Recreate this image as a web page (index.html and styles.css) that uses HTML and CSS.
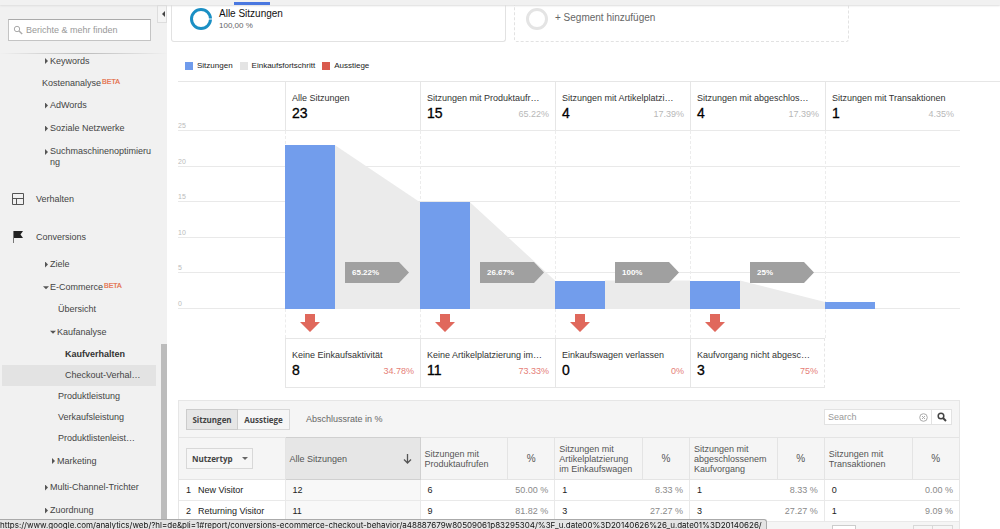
FILE: index.html
```html
<!DOCTYPE html>
<html lang="de">
<head>
<meta charset="utf-8">
<title>Kaufverhalten</title>
<link rel="stylesheet" href="styles.css">
</head>
<body>
<header class="topbar"><span class="topbar-tab"></span></header>
<div class="layout">
  <aside class="sidebar">
    <form class="side-search">
      <label class="side-field">
        <svg width="10" height="10" viewBox="0 0 10 10" fill="none" stroke="#aaa"><circle cx="4" cy="4" r="2.7"/><path d="M6 6l3.2 3" stroke-width="1.4"/></svg>
        <input type="text" placeholder="Berichte &amp; mehr finden" aria-label="Berichte &amp; mehr finden">
      </label>
    </form>
    <button class="collapse" type="button" aria-label="Navigation einklappen"></button>
    <nav>
      <ul class="nav">
        <li><a class="closed" href="#">Keywords</a></li>
        <li><a class="plain" href="#">Kostenanalyse<sup>BETA</sup></a></li>
        <li><a class="closed" href="#">AdWords</a></li>
        <li><a class="closed" href="#">Soziale Netzwerke</a></li>
        <li><a class="closed wrap" href="#">Suchmaschinenoptimierung</a></li>
        <li><a class="section" href="#"><svg width="12" height="12" viewBox="0 0 12 12" fill="none" stroke="#555"><path d="M.5.5h11v11H.5zM.5 5.5h11M4.5 5.5v6"/></svg>Verhalten</a></li>
        <li><a class="section" href="#"><svg width="12" height="12" viewBox="0 0 12 12"><path d="M1.5 0v12" stroke="#777"/><path d="M2 0h9L8.5 3.5 11 7H2z" fill="#222"/></svg>Conversions</a></li>
        <li class="first"><a class="closed" href="#">Ziele</a></li>
        <li><a class="open" href="#">E-Commerce<sup>BETA</sup></a></li>
        <li><a class="leaf" href="#">Übersicht</a></li>
        <li><a class="open deep" href="#">Kaufanalyse</a></li>
        <li><a class="leaf deep current" href="#">Kaufverhalten</a></li>
        <li><a class="leaf deep hover" href="#">Checkout-Verhal…</a></li>
        <li><a class="leaf" href="#">Produktleistung</a></li>
        <li><a class="leaf" href="#">Verkaufsleistung</a></li>
        <li><a class="leaf" href="#">Produktlistenleist…</a></li>
        <li><a class="closed deep" href="#">Marketing</a></li>
        <li class="first"><a class="closed" href="#">Multi-Channel-Trichter</a></li>
        <li><a class="closed" href="#">Zuordnung</a></li>
      </ul>
    </nav>
    <span class="scroll-thumb"></span>
  </aside>

  <main class="content">
    <section class="segments">
      <div class="segment">
        <svg width="24" height="24" viewBox="0 0 24 24" fill="none"><circle cx="12" cy="12" r="9.5" stroke="#1a8fc4" stroke-width="3"/><path d="M19 12h5" stroke="#fff"/></svg>
        <div><div class="segment-name">Alle Sitzungen</div><div class="segment-share">100,00 %</div></div>
      </div>
      <button class="segment segment-add" type="button">
        <svg width="24" height="24" viewBox="0 0 24 24" fill="none"><circle cx="12" cy="12" r="9.5" stroke="#e4e4e4" stroke-width="3"/></svg>
        <span class="segment-name">+ Segment hinzufügen</span>
      </button>
    </section>

    <ul class="legend">
      <li><i class="swatch blue"></i>Sitzungen</li>
      <li><i class="swatch grey"></i>Einkaufsfortschritt</li>
      <li><i class="swatch red"></i>Ausstiege</li>
    </ul>

    <section class="funnel">
      <div class="steps">
        <div class="step"><div class="step-name">Alle Sitzungen</div><div class="step-row"><b>23</b></div></div>
        <div class="step"><div class="step-name">Sitzungen mit Produktaufr…</div><div class="step-row"><b>15</b><span>65.22%</span></div></div>
        <div class="step"><div class="step-name">Sitzungen mit Artikelplatzi…</div><div class="step-row"><b>4</b><span>17.39%</span></div></div>
        <div class="step"><div class="step-name">Sitzungen mit abgeschlos…</div><div class="step-row"><b>4</b><span>17.39%</span></div></div>
        <div class="step"><div class="step-name">Sitzungen mit Transaktionen</div><div class="step-row"><b>1</b><span>4.35%</span></div></div>
      </div>
      <div class="plot">
        <div class="gridlines"><span>25</span><span>20</span><span>15</span><span>10</span><span>5</span><span>0</span></div>
        <div class="bars">
          <div class="col"><div class="bar" style="height:92%"></div>
            <svg class="flow" viewBox="0 0 86 25" preserveAspectRatio="none"><path d="M0 2L86 10V25H0z"/></svg><span class="rate">65.22%</span></div>
          <div class="col"><div class="bar" style="height:60%"></div>
            <svg class="flow" viewBox="0 0 86 25" preserveAspectRatio="none"><path d="M0 10L86 21V25H0z"/></svg><span class="rate">26.67%</span></div>
          <div class="col"><div class="bar" style="height:16%"></div>
            <svg class="flow" viewBox="0 0 86 25" preserveAspectRatio="none"><path d="M0 21H86V25H0z"/></svg><span class="rate">100%</span></div>
          <div class="col"><div class="bar" style="height:16%"></div>
            <svg class="flow" viewBox="0 0 86 25" preserveAspectRatio="none"><path d="M0 21L86 24V25H0z"/></svg><span class="rate">25%</span></div>
          <div class="col"><div class="bar" style="height:4%"></div></div>
        </div>
      </div>
      <div class="drops">
        <div class="drop"><svg width="20" height="18" viewBox="0 0 20 18"><path d="M5 0h10v8h5L10 18 0 8h5z"/></svg></div>
        <div class="drop"><svg width="20" height="18" viewBox="0 0 20 18"><path d="M5 0h10v8h5L10 18 0 8h5z"/></svg></div>
        <div class="drop"><svg width="20" height="18" viewBox="0 0 20 18"><path d="M5 0h10v8h5L10 18 0 8h5z"/></svg></div>
        <div class="drop"><svg width="20" height="18" viewBox="0 0 20 18"><path d="M5 0h10v8h5L10 18 0 8h5z"/></svg></div>
        <div class="drop"></div>
      </div>
      <div class="exits">
        <div class="step"><div class="step-name">Keine Einkaufsaktivität</div><div class="step-row"><b>8</b><span>34.78%</span></div></div>
        <div class="step"><div class="step-name">Keine Artikelplatzierung im…</div><div class="step-row"><b>11</b><span>73.33%</span></div></div>
        <div class="step"><div class="step-name">Einkaufswagen verlassen</div><div class="step-row"><b>0</b><span>0%</span></div></div>
        <div class="step"><div class="step-name">Kaufvorgang nicht abgesc…</div><div class="step-row"><b>3</b><span>75%</span></div></div>
      </div>
    </section>

    <section class="report">
      <div class="toolbar">
        <div class="tabs"><button class="btn active" type="button">Sitzungen</button><button class="btn" type="button">Ausstiege</button></div>
        <span class="toolbar-note">Abschlussrate in %</span>
        <form class="table-search">
          <input type="text" placeholder="Search" aria-label="Search">
          <button class="clear" type="button" aria-label="Suche leeren"><svg width="9" height="9" viewBox="0 0 9 9" fill="none" stroke="#aaa"><circle cx="4.5" cy="4.5" r="3.8"/><path d="M3 3l3 3M6 3L3 6"/></svg></button>
          <button class="go" type="button" aria-label="Suchen"><svg width="10" height="10" viewBox="0 0 10 10" fill="none" stroke="#444"><circle cx="4" cy="4" r="2.8" stroke-width="1.5"/><path d="M6 6l3 3" stroke-width="2"/></svg></button>
        </form>
      </div>
      <table>
        <colgroup><col class="c-dim"><col class="c-all"><col class="c-num"><col class="c-pct"><col class="c-num"><col class="c-pct"><col class="c-num"><col class="c-pct"><col class="c-num"><col class="c-pct"></colgroup>
        <thead>
          <tr>
            <th class="dim"><button class="btn type" type="button">Nutzertyp<i></i></button></th>
            <th class="sorted"><div class="sort">Alle Sitzungen<svg width="9" height="10" viewBox="0 0 9 10" fill="none" stroke="#555" stroke-width="1.3"><path d="M4.5 0v9M1 5.500l3.500 3.500L8 5.500"/></svg></div></th>
            <th>Sitzungen mit Produktaufrufen</th><th class="pct">%</th>
            <th>Sitzungen mit Artikelplatzierung<br>im Einkaufswagen</th><th class="pct">%</th>
            <th>Sitzungen mit abgeschlossenem Kaufvorgang</th><th class="pct">%</th>
            <th>Sitzungen mit Transaktionen</th><th class="pct">%</th>
          </tr>
        </thead>
        <tbody>
          <tr><td class="dim"><span>1</span>New Visitor</td><td class="all">12</td><td>6</td><td class="pct">50.00 %</td><td>1</td><td class="pct">8.33 %</td><td>1</td><td class="pct">8.33 %</td><td>0</td><td class="pct">0.00 %</td></tr>
          <tr><td class="dim"><span>2</span>Returning Visitor</td><td class="all">11</td><td>9</td><td class="pct">81.82 %</td><td>3</td><td class="pct">27.27 %</td><td>3</td><td class="pct">27.27 %</td><td>1</td><td class="pct">9.09 %</td></tr>
        </tbody>
      </table>
      <div class="pager">
        <input type="text" aria-label="Seite">
        <div class="tabs"><button class="btn" type="button" aria-label="Zurück"></button><button class="btn" type="button" aria-label="Weiter"></button></div>
      </div>
    </section>
  </main>
</div>
<div class="status">https://www.google.com/analytics/web/?hl=de&amp;pli=1#report/conversions-ecommerce-checkout-behavior/a48887679w80509061p83295304/%3F_u.date00%3D20140626%26_u.date01%3D20140626/</div>
</body>
</html>
```

FILE: styles.css
```css
* { box-sizing: border-box; }
body {
  margin: 0;
  height: 100vh;
  overflow: hidden;
  display: flex;
  flex-direction: column;
  background: #fff;
  color: #333;
  font: 9px/11px "Liberation Sans", Arial, sans-serif;
}
ul { list-style: none; margin: 0; padding: 0; }
a { color: inherit; text-decoration: none; }
svg { flex: none; display: block; }
button, input { font: inherit; color: inherit; margin: 0; padding: 0; border: 0; background: none; border-radius: 0; }
input { outline: 0; min-width: 0; }
input::placeholder { color: #999; opacity: 1; }

.topbar {
  flex: none;
  height: 5px;
  padding-left: 234px;
  display: flex;
  align-items: flex-end;
  background: #f1f1f1;
  box-shadow: 0 1px 2px #ddd;
  position: relative;
  z-index: 2;
}
.topbar-tab { width: 36px; height: 3px; background: #4a78e0; }
.layout { flex: 1; min-height: 0; display: flex; }

/* Sidebar */
.sidebar { position: relative; flex: none; width: 167px; background: #f1f1f1; overflow: hidden; }
.side-search { height: 49px; padding: 14px 16px 0 8px; position: relative; border-bottom: 1px solid; border-image: linear-gradient(90deg, #f1f1f1, #bbb 50%, #f1f1f1) 1; }
.side-field { display: flex; align-items: center; gap: 3px; height: 22px; padding-left: 4px; background: #fff; border: 1px solid #c4c4c4; border-top-color: #aaa; }
.side-field input { flex: 1; }
.collapse { position: absolute; right: 0; top: 0; width: 10px; height: 18px; background: #f4f4f4; border: 1px solid #ddd; }
.collapse::before { content: ""; display: block; margin: 0 auto; width: 3px; border: 3px solid transparent; border-right-color: #444; border-left: 0; }
.nav { margin-top: -4px; color: #444; }
.nav a { display: flex; align-items: center; min-height: 23px; padding-left: 50px; position: relative; white-space: nowrap; }
.nav li:first-child a, .nav a.plain { min-height: 22px; }
.nav a.plain { padding-left: 42px; }
.nav a.wrap { white-space: normal; overflow-wrap: anywhere; padding: 6px 12px 6px 50px; align-items: flex-start; }
.nav a.section { gap: 12px; padding-left: 12px; height: 26px; margin-top: 12px; }
.nav .first { margin-top: 3px; }
.nav a.leaf { padding-left: 58px; min-height: 21px; }
.nav a.leaf.deep { padding-left: 65px; }
.nav a.deep { padding-left: 57px; min-height: 24px; }
.nav a.leaf.deep { min-height: 21px; }
.nav a.current { font-weight: bold; color: #333; }
.nav a.leaf.hover { background: #e3e3e3; margin: 0 11px 0 2px; padding-left: 63px; }
.nav sup { font-size: 7px; line-height: 7px; color: #e4683f; margin: 0 0 4px 1px; -webkit-text-stroke: 0.2px #e4683f; }
.closed::before, .open::before { content: ""; width: 5px; margin-left: -5px; flex: none; height: 6px; background: #555; }
.closed::before { clip-path: polygon(0 0, 60% 50%, 0 100%); }
.closed.wrap::before { margin-top: 3px; }
.open::before { width: 6px; margin: 0 1px 0 -7px; clip-path: polygon(0 30%, 100% 30%, 50% 80%); }
.scroll-thumb { position: absolute; right: 0; top: 339px; bottom: 0; width: 6px; background: #bcbcbc; }

/* Content */
.content { flex: 1; min-width: 0; overflow: hidden; }
.segments { display: flex; gap: 8px; padding-left: 4px; height: 37px; }
.segment { flex: 0 1 335px; display: flex; align-items: flex-start; gap: 6px; padding: 2px 0 0 17px; border: 1px solid #e2e2e2; border-top: 0; border-radius: 0 0 3px 3px; text-align: left; }
.segment-add { border-style: dashed; padding-left: 10px; }
.segment-name { font-size: 10px; line-height: 13px; color: #111; }
.segment-share { font-size: 8px; line-height: 11px; color: #666; }
.segment-add .segment-name { color: #666; padding-top: 4px; }
.legend { display: flex; gap: 7px; height: 39px; padding: 19px 0 0 18px; font-size: 8px; line-height: 10px; color: #222; }
.legend li { display: flex; gap: 4px; height: 10px; align-items: center; }
.swatch { width: 8px; height: 8px; }
.blue { background: #6f9bec; }
.grey { background: #e4e4e4; }
.red { background: #d95b4e; }

.funnel { border-top: 1px solid #e6e6e6; margin-left: 11px; padding-right: 40px; }
.steps, .bars, .drops, .exits { display: grid; grid-template-columns: repeat(5, minmax(0, 1fr)); margin-left: 107px; }
.steps { height: 49px; }
.step { border-left: 1px solid #e6e6e6; padding: 10px 6px 0; }
.step-name { white-space: nowrap; line-height: 13px; }
.step-row { display: flex; justify-content: space-between; align-items: center; height: 16px; }
.step-row b { font-size: 14px; font-weight: normal; color: #000; -webkit-text-stroke: 0.3px #000; }
.step-row span { color: #b8b8b8; padding-top: 2px; }
.plot { position: relative; height: 178px; }
.gridlines { position: absolute; top: -20%; bottom: 0; left: 0; right: 0; display: flex; flex-direction: column; color: #bbb; font-size: 7px; line-height: 8px; }
.gridlines span { flex: 1; display: flex; align-items: flex-end; border-bottom: 1px solid #e9e9e9; }
.bars { height: 100%; position: relative; }
.col { position: relative; display: flex; align-items: flex-end; border-left: 1px dashed #ececec; }
.bar { width: 50px; margin-left: -1px; background: #729dec; flex: none; }
.flow { flex: 1; width: 0; min-width: 0; height: 100%; fill: #ebebeb; }
.rate { position: absolute; z-index: 1; left: 59px; bottom: 26px; width: 64px; height: 21px; padding-left: 7px; background: #a0a0a0; color: #fff; font-weight: bold; font-size: 8px; line-height: 21px; clip-path: polygon(0 0, 54px 0, 100% 50%, 54px 100%, 0 100%); }
.drops { height: 29px; }
.drop { border-left: 1px dashed #ececec; padding: 5px 0 0 14px; }
.drop svg { fill: #e0685c; }
.exits { height: 50px; }
.exits .step { border-top: 1px solid #e6e6e6; border-bottom: 1px solid #e6e6e6; }
.exits .step:last-child { border-right: 1px dashed #e6e6e6; }
.exits .step-row span { color: #e58078; }

/* Report table */
.report { margin: 12px 40px 0 11px; background: #f5f5f5; border: 1px solid #e6e6e6; }
.toolbar { display: flex; align-items: center; height: 36px; padding: 0 7px; }
.tabs { display: flex; }
.btn { height: 21px; padding: 0 5px; border: 1px solid #d8d8d8; background: #f6f6f6; font: bold 8px/11px "Open Sans", sans-serif; color: #444; }
.tabs .btn { min-width: 52px; }
.btn + .btn { border-left: 0; }
.btn.active { background: #e6e6e6; border-color: #ccc; }
.toolbar-note { margin-left: 16px; color: #666; }
.table-search { display: flex; height: 16px; margin: 0 0 4px auto; width: 128px; background: #fff; border: 1px solid #e2e2e2; }
.table-search input { flex: 1; padding-left: 3px; }
.clear { width: 15px; display: grid; place-items: center; }
.go { width: 20px; display: grid; place-items: center; border-left: 1px solid #e2e2e2; }
table { width: 100%; table-layout: fixed; border-collapse: collapse; }
.c-dim { width: 106px; }
.c-all { width: 135px; }
.c-pct { width: 47px; }
th { height: 42px; padding: 0 0 0 4px; text-align: left; font-weight: normal; line-height: 10px; color: #555; border: 1px solid #e4e4e4; }
th:first-child, td:first-child { border-left: 0; }
th:last-child, td:last-child { border-right: 0; }
th.dim { padding-left: 7px; }
th.pct { text-align: center; padding: 0; font-size: 10px; }
th.sorted { background: #e6e6e6; border-color: #d0d0d0; }
.sort { display: flex; align-items: center; justify-content: space-between; padding-right: 8px; }
.type { display: flex; align-items: center; gap: 9px; width: 67px; }
.type i { border: 3px solid transparent; border-top-color: #666; border-bottom: 0; }
td { height: 21px; padding: 0 0 0 7px; background: #fff; border: 1px solid #e9e9e9; border-width: 1px 0 1px 1px; color: #222; }
td.dim span { display: inline-block; width: 12px; }
td.all { background: #f8f8f8; }
td.pct { text-align: right; padding: 0 6px 0 0; color: #8a8a8a; border-left: 0; }
.pager { display: flex; justify-content: flex-end; gap: 57px; padding: 3px 6px 0 0; height: 28px; }
.pager input { width: 24px; height: 18px; background: #fff; border: 1px solid #ccc; }
.pager .btn { min-width: 20px; }

.status { position: fixed; left: 0; bottom: 0; height: 10px; padding-right: 4px; overflow: hidden; background: #e4e4e4; border: 1px solid #aaa; border-width: 1px 1px 0 0; border-radius: 0 3px 0 0; white-space: nowrap; font: 8px/10px Inter, sans-serif; color: #111; z-index: 3; }
```
